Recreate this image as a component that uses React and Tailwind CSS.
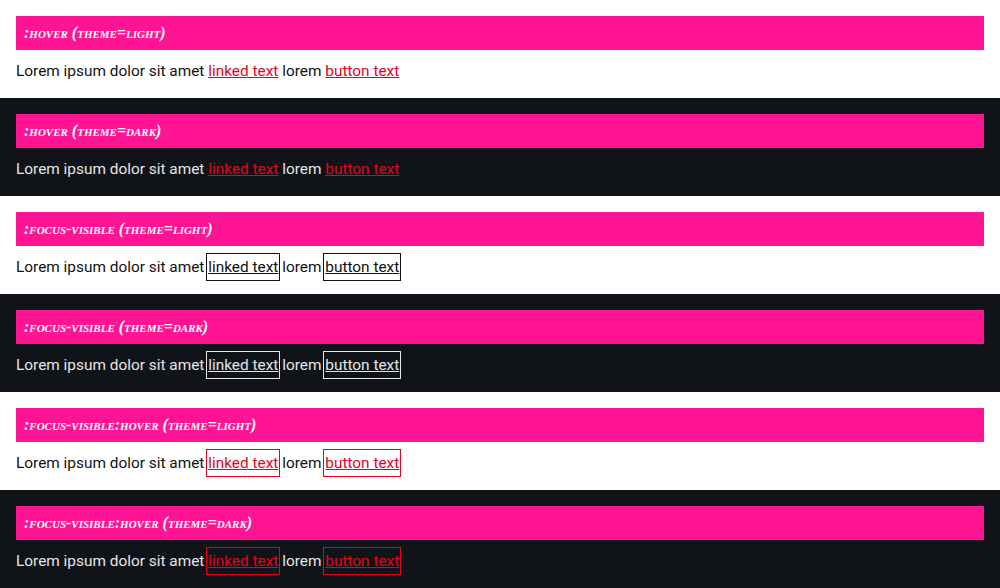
import React from 'react';

const SECTIONS = [
  { label: ':hover (theme=light)', dark: false, hover: true, focus: false },
  { label: ':hover (theme=dark)', dark: true, hover: true, focus: false },
  { label: ':focus-visible (theme=light)', dark: false, hover: false, focus: true },
  { label: ':focus-visible (theme=dark)', dark: true, hover: false, focus: true },
  { label: ':focus-visible:hover (theme=light)', dark: false, hover: true, focus: true },
  { label: ':focus-visible:hover (theme=dark)', dark: true, hover: true, focus: true },
];

const Section = ({ label, dark, hover, focus }) => {
  // link colour: red on hover, otherwise inherit theme text
  const linkColor = hover ? 'text-[#e8001c]' : dark ? 'text-[#e6e6e6]' : 'text-[#111111]';
  const ring = !focus
    ? ''
    : hover
      ? 'outline outline-1 outline-offset-1 outline-[#e8001c]'
      : dark
        ? 'outline outline-1 outline-offset-1 outline-[#e6e6e6]'
        : 'outline outline-1 outline-offset-1 outline-[#111111]';

  return (
    <section className={`px-4 pt-4 pb-4 ${dark ? 'bg-[#101419] text-[#e6e6e6]' : 'bg-white text-[#111111]'}`}>
      <h2 className="h-[34px] px-2 flex items-center bg-[#ff1493] text-white italic font-bold text-[16px] [font-variant:small-caps] font-['Liberation_Serif',serif]">
        {label}
      </h2>
      <p className="mt-2 h-6 pt-px leading-6 text-[15.4px] font-['Roboto',sans-serif]">
        Lorem ipsum dolor sit amet{' '}
        <a className={`inline-block leading-6 underline ${linkColor} ${ring}`}>linked text</a>
        {' '}lorem{' '}
        <button className={`inline-block leading-6 underline ${linkColor} ${ring}`}>button text</button>
      </p>
    </section>
  );
};

export default function App() {
  return (
    <div className="w-[1000px] h-[588px] overflow-hidden">
      {SECTIONS.map(s => (
        <Section key={s.label} {...s} />
      ))}
    </div>
  );
}
